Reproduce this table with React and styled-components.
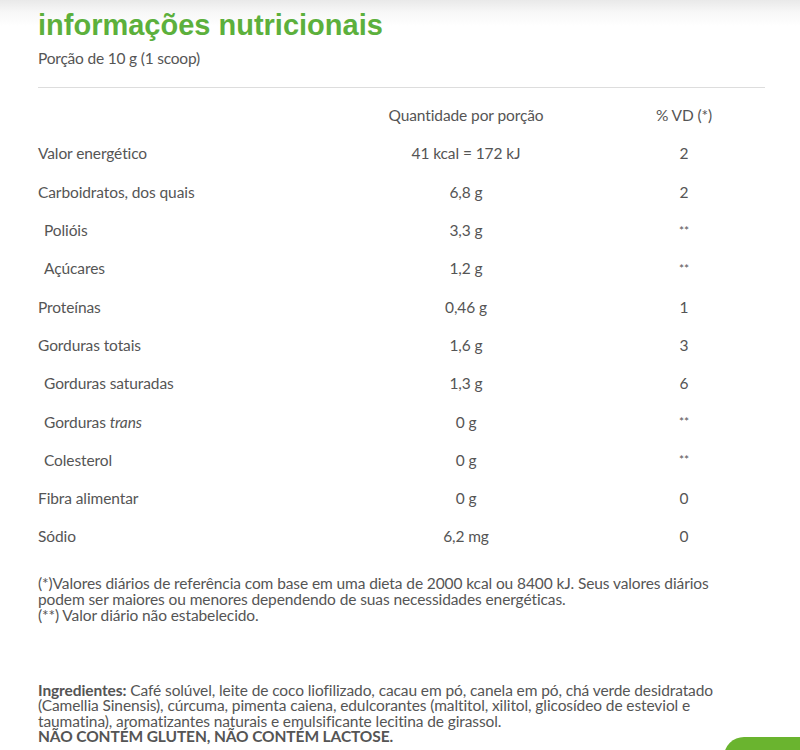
import React from 'react';
import styled, { createGlobalStyle } from 'styled-components';

const GlobalStyle = createGlobalStyle`
  html, body {
    margin: 0;
    padding: 0;
    background: #fff;
  }
  body {
    font-family: Lato, "Open Sans", sans-serif;
    color: #555;
    overflow: hidden;
  }
`;

const rows = [
  { name: 'Valor energético', qty: '41 kcal = 172 kJ', vd: '2' },
  { name: 'Carboidratos, dos quais', qty: '6,8 g', vd: '2' },
  { name: 'Polióis', qty: '3,3 g', vd: '**', sub: true },
  { name: 'Açúcares', qty: '1,2 g', vd: '**', sub: true },
  { name: 'Proteínas', qty: '0,46 g', vd: '1' },
  { name: 'Gorduras totais', qty: '1,6 g', vd: '3' },
  { name: 'Gorduras saturadas', qty: '1,3 g', vd: '6', sub: true },
  { name: <>Gorduras <em>trans</em></>, qty: '0 g', vd: '**', sub: true },
  { name: 'Colesterol', qty: '0 g', vd: '**', sub: true },
  { name: 'Fibra alimentar', qty: '0 g', vd: '0' },
  { name: 'Sódio', qty: '6,2 mg', vd: '0' },
];

const App = () => {
  return (
    <>
      <GlobalStyle />
      <Page>
        <Content>
          <Title>informações nutricionais</Title>
          <Portion>Porção de 10 g (1 scoop)</Portion>
          <Divider />
          <Table>
            <Row>
              <Cell />
              <Cell $center>Quantidade por porção</Cell>
              <Cell $center>% VD (*)</Cell>
            </Row>
            {rows.map((r, i) => (
              <Row key={i}>
                <Cell $sub={r.sub}>{r.name}</Cell>
                <Cell $center>{r.qty}</Cell>
                <Cell $center $small={r.vd === '**'}>{r.vd}</Cell>
              </Row>
            ))}
          </Table>
          <Notes>
            (*)Valores diários de referência com base em uma dieta de 2000 kcal ou 8400 kJ. Seus valores diários podem ser maiores ou menores dependendo de suas necessidades energéticas.
            <br />
            (**) Valor diário não estabelecido.
          </Notes>
          <Ingredients>
            <strong>Ingredientes:</strong> Café solúvel, leite de coco liofilizado, cacau em pó, canela em pó, chá verde desidratado (Camellia Sinensis), cúrcuma, pimenta caiena, edulcorantes (maltitol, xilitol, glicosídeo de esteviol e taumatina), aromatizantes naturais e emulsificante lecitina de girassol.
            <br />
            <strong>NÃO CONTÉM GLUTEN, NÃO CONTÉM LACTOSE.</strong>
          </Ingredients>
        </Content>
        <GreenTab />
      </Page>
    </>
  );
};

export default App;

const Page = styled.div`
  position: relative;
  width: 800px;
  height: 750px;
  overflow: hidden;
  background: linear-gradient(to bottom, #e9e9e9 0px, #f7f7f7 12px, #fff 26px);
`;

const Content = styled.div`
  padding: 7px 35px 0 38px;
  display: flex;
  flex-direction: column;
`;

const Title = styled.h2`
  margin: 0;
  font-family: "Liberation Sans", Arial, sans-serif;
  font-size: 29px;
  font-weight: 700;
  color: #5cb03c;
  line-height: 36px;
`;

const Portion = styled.div`
  margin-top: 6px;
  font-size: 15.5px;
  letter-spacing: -0.2px;
  color: #555;
  line-height: 18px;
`;

const Divider = styled.hr`
  margin: 20px 0 0;
  width: 727px;
  border: 0;
  border-top: 1px solid #ddd;
`;

const Table = styled.div`
  display: flex;
  flex-direction: column;
  margin-top: 8px;
`;

const Row = styled.div`
  display: grid;
  grid-template-columns: 300px 256px 180px;
  height: 38.3px;
  align-items: center;
  color: #555;
`;

const Cell = styled.div`
  text-align: ${p => (p.$center ? 'center' : 'left')};
  padding-left: ${p => (p.$sub ? '6px' : '0')};
  font-size: ${p => (p.$small ? '12px' : '15.5px')};
  letter-spacing: ${p => (p.$small ? '0' : '-0.1px')};

  em {
    font-style: italic;
  }
`;

const Notes = styled.p`
  margin: 19px 0 0;
  width: 700px;
  font-size: 15.5px;
  letter-spacing: -0.1px;
  line-height: 16px;
  color: #555;
`;

const Ingredients = styled.p`
  margin: 60px 0 0;
  width: 706px;
  font-size: 15.5px;
  letter-spacing: -0.1px;
  line-height: 15.5px;
  color: #555;

  strong {
    font-weight: 700;
  }
`;

const GreenTab = styled.div`
  position: absolute;
  left: 724px;
  top: 737px;
  width: 120px;
  height: 40px;
  border-radius: 20px;
  background: #6ab42f;
`;
